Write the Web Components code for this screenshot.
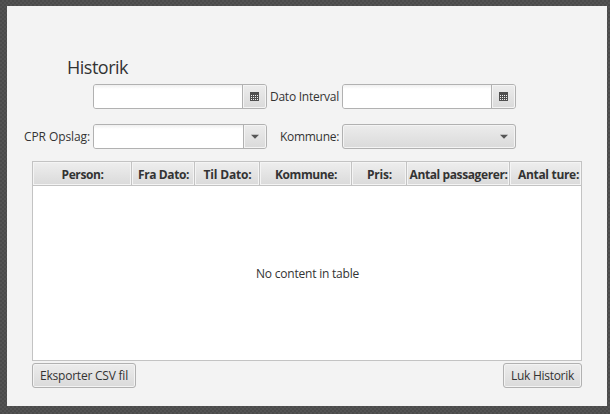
<!DOCTYPE html>
<html lang="da">
<head>
<meta charset="utf-8">
<title>Historik</title>
<style>
html, body { margin: 0; height: 100%; overflow: hidden; }
body {
  font: 12px/16px "Open Sans", "Noto Sans", sans-serif; color: #333;
  background: conic-gradient(#535353 25%, #4a4a4a 0 50%, #535353 0 75%, #4a4a4a 0) 0 0 / 4px 4px;
}
</style>
</head>
<body>
<history-window></history-window>
<script>
const define = (name, markup, setup) => {
  const template = document.createElement('template');
  template.innerHTML = markup;
  customElements.define(name, class extends HTMLElement {
    connectedCallback() {
      if (this.shadowRoot) return;
      this.attachShadow({ mode: 'open' }).append(template.content.cloneNode(true));
      if (setup) setup(this);
    }
  });
};

// A single-line label whose tracking is adjusted so the text spans the requested width.
define('ui-text', `
<style>
:host { display: block; white-space: nowrap; flex: none; }
span { display: inline-block; }
</style><span><slot></slot></span>`, host => {
  const span = host.shadowRoot.querySelector('span');
  const width = Number(host.getAttribute('width'));
  const natural = span.getBoundingClientRect().width;
  const spacing = (width - natural) / host.textContent.length;
  span.style.letterSpacing = spacing + 'px';
  host.style.width = width + 'px';
});

define('ui-field', `
<style>
:host { display: flex; box-sizing: border-box; width: 174px; height: 25px; border: 1px solid #b1b1b1; border-radius: 3px;
  background: linear-gradient(#ececec, #dadada); overflow: hidden; box-shadow: inset 0 0 0 1px #f4f4f4; }
.input { flex: 1; background: linear-gradient(#f0f0f0, #fff 4px); border-right: 1px solid #b1b1b1; }
.action { box-sizing: border-box; width: 23px; display: grid; place-items: center; box-shadow: inset 0 0 0 1px #f4f4f4; }
:host([kind=combo]) .action, :host([kind=choice]) .action { width: 22px; }
:host([kind=choice]) .input { background: none; border: 0; }
:host([kind=choice]) .action { box-shadow: none; }
svg { display: none; }
:host([kind=date]) .cal, :host([kind=combo]) .arrow, :host([kind=choice]) .arrow { display: block; }
</style>
<div class="input"></div>
<div class="action">
<svg class="cal" width="9" height="9" viewBox="0 0 9 9" shape-rendering="crispEdges"><path fill="#4f4f4f" d="M0 0h9v9H0z"/><path fill="#eee" d="M1 3h1v1H1zM3 3h1v1H3zM5 3h1v1H5zM7 3h1v1H7zM1 5h1v1H1zM3 5h1v1H3zM5 5h1v1H5zM7 5h1v1H7zM1 7h1v1H1zM3 7h1v1H3zM5 7h1v1H5zM7 7h1v1H7z"/></svg>
<svg class="arrow" width="8" height="5" viewBox="0 0 8 5"><path fill="#555" d="M0 .7h8L4 4.8z"/></svg>
</div>`);

define('ui-button', `
<style>
:host { display: flex; box-sizing: border-box; height: 25px; padding: 4px 7px 2px; border: 1px solid #b1b1b1; border-radius: 3px;
  background: linear-gradient(#ececec, #dadada); box-shadow: inset 0 0 0 1px #f3f3f3; }
</style><slot></slot>`);

define('column-header', `
<style>
:host { display: flex; justify-content: center; box-sizing: border-box; height: 24px; padding: 5px 0 0 1px; font-weight: 700;
  border-right: 1px solid #c3c3c3; border-bottom: 1px solid #c3c3c3;
  background: linear-gradient(#eee, #dadada); box-shadow: inset 0 0 0 1px #f4f4f4; overflow: hidden; }
:host(:last-child) { border-right: 0; justify-content: flex-start; padding-left: 8px; }
</style><slot></slot>`);

define('data-table', `
<style>
:host { display: flex; flex-direction: column; box-sizing: border-box; height: 200px; border: 1px solid #c3c3c3; background: #fff; }
.head { display: grid; grid-template-columns: 99px 63px 65px 92px 55px 103px 71px; }
.body { flex: 1; display: grid; place-items: center; padding: 2px 0 0 1px; }
</style>
<div class="head"><slot name="columns"></slot></div>
<div class="body"><slot></slot></div>`);

// The whole history dialog: title, filter form, result table and action buttons.
define('history-window', `
<style>
:host { display: flow-root; box-sizing: border-box; width: 600px; height: 400px; margin: 6px 0 0 7px; background: #f3f3f3; }
h1 { margin: 48px 0 0 60px; font: 400 18px/26px "Open Sans", "Noto Sans", sans-serif; }
.form { display: grid; grid-template-columns: 83px 174px 69px 174px; gap: 15px 3px; margin-top: 4px; align-items: center; }
.form ui-text { justify-self: end; }
data-table { margin: 12px 25px 0; }
.actions { display: flex; justify-content: space-between; margin: 2px 25px 0; }
.columns { display: contents; }
</style>
<h1><ui-text width="61">Historik</ui-text></h1>
<div class="form">
<span></span><ui-field kind="date"></ui-field><ui-text width="69">Dato Interval</ui-text><ui-field kind="date"></ui-field>
<ui-text width="66">CPR Opslag:</ui-text><ui-field kind="combo"></ui-field><ui-text width="59">Kommune:</ui-text><ui-field kind="choice"></ui-field>
</div>
<data-table>
<div class="columns" slot="columns">
<column-header><ui-text width="42">Person:</ui-text></column-header>
<column-header><ui-text width="51">Fra Dato:</ui-text></column-header>
<column-header><ui-text width="48">Til Dato:</ui-text></column-header>
<column-header><ui-text width="62">Kommune:</ui-text></column-header>
<column-header><ui-text width="25">Pris:</ui-text></column-header>
<column-header><ui-text width="98">Antal passagerer:</ui-text></column-header>
<column-header><ui-text width="61">Antal ture:</ui-text></column-header>
</div>
<ui-text width="103">No content in table</ui-text>
</data-table>
<div class="actions">
<ui-button><ui-text width="88">Eksporter CSV fil</ui-text></ui-button>
<ui-button><ui-text width="63">Luk Historik</ui-text></ui-button>
</div>`);
</script>
</body>
</html>
